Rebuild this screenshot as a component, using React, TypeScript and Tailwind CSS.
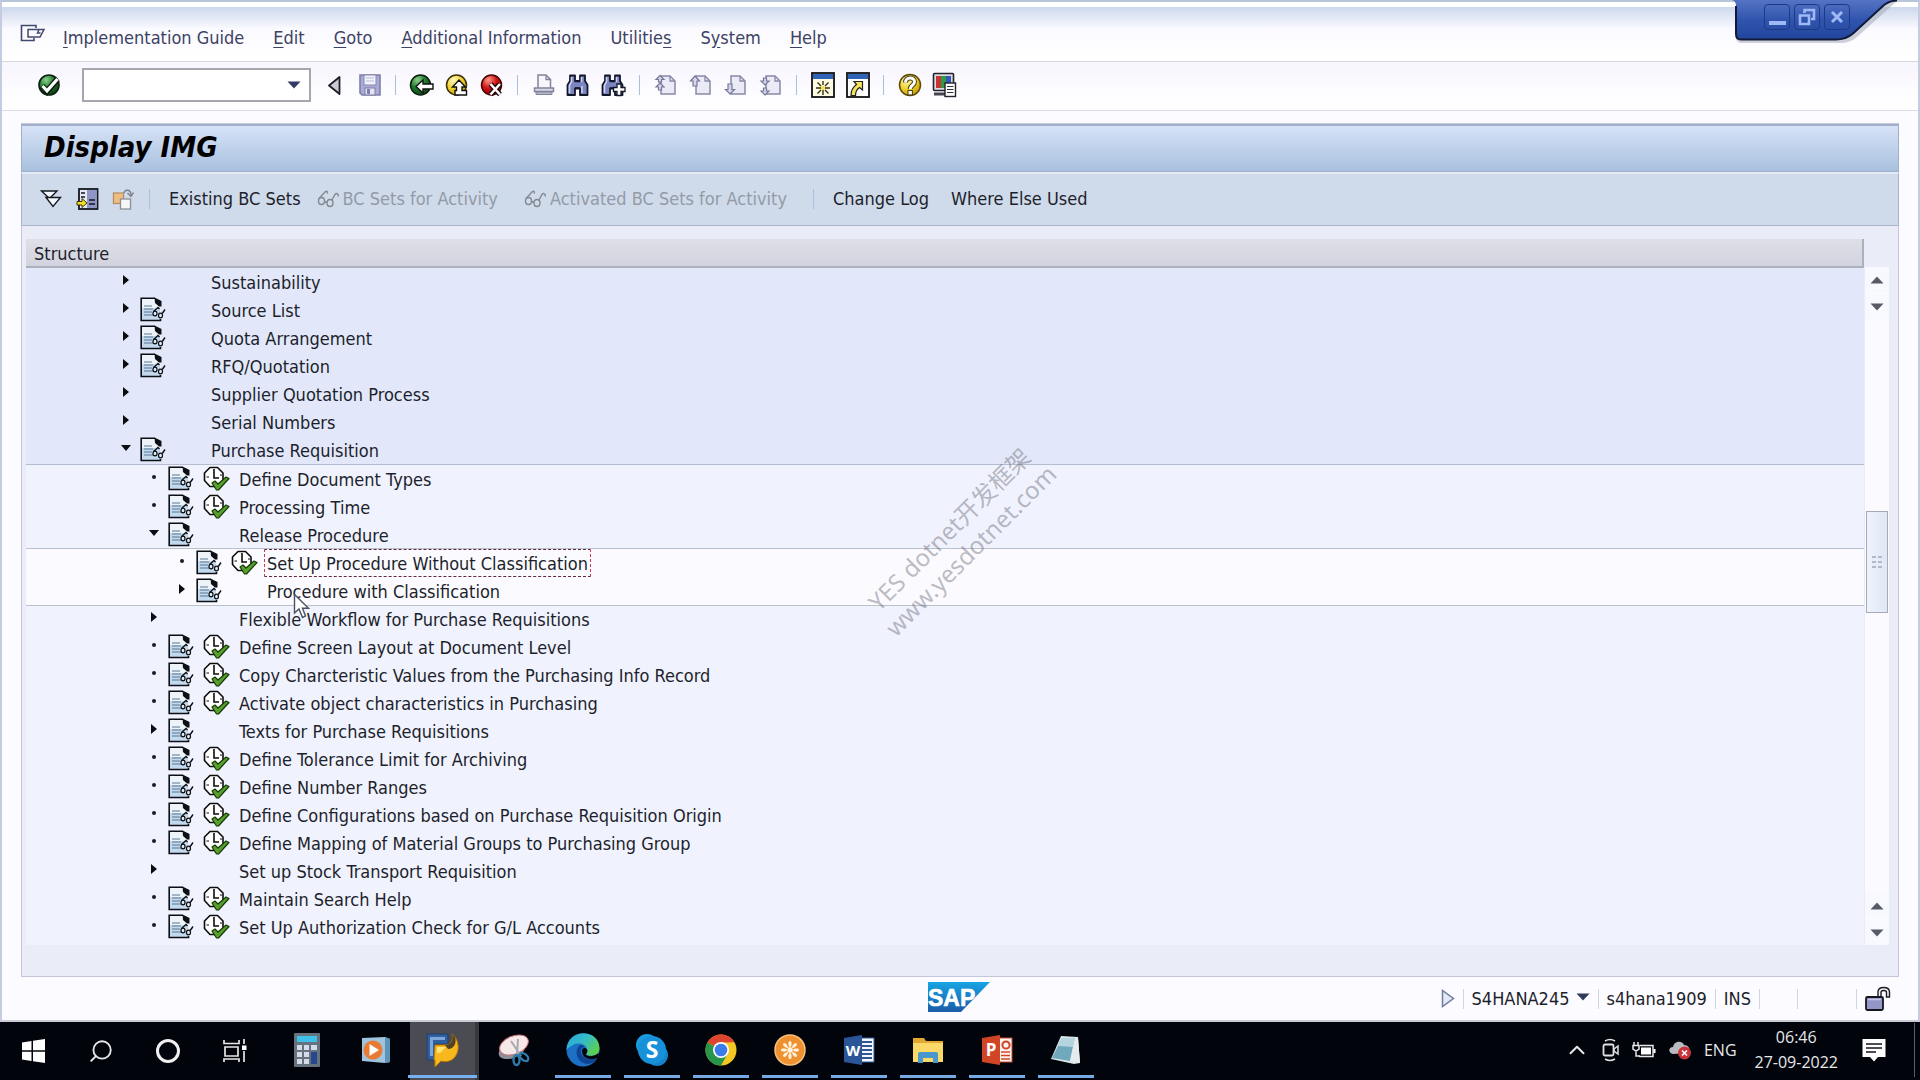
import React from 'react';
import { Search, ChevronUp } from 'lucide-react';

type IconProps = { className?: string };

const CheckBall = () => <svg width="24" height="24" viewBox="0 0 24 24">
    <defs>
      <radialGradient id="greenBall" cx="0.35" cy="0.25" r="0.9">
        <stop offset="0" stopColor="#8fd08f" />
        <stop offset="0.45" stopColor="#1d7a2a" />
        <stop offset="1" stopColor="#06300c" />
      </radialGradient>
      <radialGradient id="yellowBall" cx="0.35" cy="0.25" r="0.9">
        <stop offset="0" stopColor="#fff9c0" />
        <stop offset="0.5" stopColor="#f0cf28" />
        <stop offset="1" stopColor="#b58a00" />
      </radialGradient>
      <radialGradient id="redBall" cx="0.35" cy="0.25" r="0.9">
        <stop offset="0" stopColor="#ff9a8c" />
        <stop offset="0.45" stopColor="#cf1414" />
        <stop offset="1" stopColor="#7c0000" />
      </radialGradient>
    </defs>
    <circle cx="12" cy="12" r="10" fill="url(#greenBall)" stroke="#0a1f10" strokeWidth="1.6" />
    <path d="M5 13 L10 18.5 L20.5 6" fill="none" stroke="#0a1f10" strokeWidth="6" />
    <path d="M5.5 13 L10 17.8 L20.5 6" fill="none" stroke="#fff" strokeWidth="3.2" />
  </svg>;

const BackTriangle = () => <svg width="15" height="21" viewBox="0 0 15 21">
    <path d="M12.5 2 V19 L2 10.5 Z" fill="#c9cad3" stroke="#1d1d28" strokeWidth="1.8" strokeLinejoin="round" />
  </svg>;

const SaveIcon = () => <svg width="24" height="24" viewBox="0 0 24 24">
    <path d="M2 2 H22 V22 H4 L2 20 Z" fill="#a9abd6" stroke="#7d7fa8" strokeWidth="1.6" />
    <rect x="6" y="2" width="12" height="10" fill="#f2f2fb" stroke="#8587ae" />
    <path d="M8 5 H16 M8 8 H16" stroke="#b9bbd8" />
    <rect x="7" y="15" width="10" height="7" fill="#e4e4f2" stroke="#7d7fa8" />
    <rect x="9" y="16" width="3" height="5" fill="#7d7fa8" />
  </svg>;

const ExitBack = () => <svg width="25" height="24" viewBox="0 0 25 24">
    <circle cx="11.5" cy="12" r="10" fill="url(#greenBall)" stroke="#0a1f10" strokeWidth="1.5" />
    <path d="M7 13.5 L14 7 V11 H24 V16 H14 V20 Z" fill="#fff" stroke="#111" strokeWidth="1.4" />
  </svg>;

const ExitUp = () => <svg width="24" height="24" viewBox="0 0 24 24">
    <circle cx="11.5" cy="12" r="10" fill="url(#yellowBall)" stroke="#3c3206" strokeWidth="1.5" />
    <path d="M14 7 L20.5 14 H17 V17.5 H21.5 V22 H10 V17.5 H11.5 V14 H7.5 Z" fill="#fff" stroke="#111" strokeWidth="1.4" />
  </svg>;

const CancelBall = () => <svg width="24" height="24" viewBox="0 0 24 24">
    <circle cx="11.5" cy="12" r="10" fill="url(#redBall)" stroke="#4a0505" strokeWidth="1.5" />
    <path d="M10.5 11 L20 21.5 M20 11 L10.5 21.5" stroke="#1c0505" strokeWidth="5" />
    <path d="M10.5 11 L20 21.5 M20 11 L10.5 21.5" stroke="#fff" strokeWidth="2.6" />
  </svg>;

const PrintIcon = () => <svg width="22" height="24" viewBox="0 0 22 24">
    <path d="M5 15 V2 H13 L17.5 6.5 V15" fill="#f7f7fb" stroke="#82829c" strokeWidth="1.5" />
    <path d="M13 2 V6.5 H17.5" fill="none" stroke="#82829c" strokeWidth="1.3" />
    <path d="M1.5 15 H20.5 V18.5 H1.5 Z" fill="#d8d8e6" stroke="#82829c" strokeWidth="1.5" />
    <path d="M3 19 H19 V21.5 H3 Z" fill="#b8b8cc" stroke="#82829c" />
  </svg>;

const Find = ({ plus }: { plus?: boolean }) => <svg width="25" height="24" viewBox="0 0 25 24">
    <path d="M4 2.5 H9 V8 H14 V2.5 H19 V8 L21.5 12 V22 H14 V15.5 H9 V22 H1.5 V12 L4 8 Z" fill="#7b85c0" stroke="#14172b" strokeWidth="1.8" strokeLinejoin="round" />
    <path d="M5.5 4 V8.5 L3.5 12.5 V20 M15.5 4 V9 M16 13 V20" stroke="#cdd3f2" strokeWidth="1.6" fill="none" />
    <path d="M9 8.5 H14 M9 15 H14" stroke="#14172b" strokeWidth="1.4" />
    {plus && <path d="M16 11 H20 V14.5 H24 V18.5 H20 V22.5 H16 V18.5 H12.5 V14.5 H16 Z" fill="#fff" stroke="#14172b" strokeWidth="1.3" />}
  </svg>;

const pageArrows: Record<string, string> = {
  first: 'M6 1.5 L10 5.5 H7.5 V8 H4.5 V5.5 H2 Z M6 9 L10 13 H7.5 V16 H4.5 V13 H2 Z',
  prev: 'M6 2 L10.5 7 H8 V12 H4 V7 H1.5 Z',
  next: 'M6 20 L10.5 15.5 H8 V10 H4 V15.5 H1.5 Z',
  last: 'M6 11 L10 7 H7.5 V4 H4.5 V7 H2 Z M6 21 L10 17 H7.5 V14 H4.5 V17 H2 Z'
};

const PageNav = ({ kind }: { kind: string }) => <svg width="23" height="23" viewBox="0 0 23 23">
    <path d="M7 2 H16 L21 7 V20 H7 Z" fill="#ebebf7" stroke="#8989a8" strokeWidth="1.5" />
    <path d="M16 2 V7 H21" fill="none" stroke="#8989a8" strokeWidth="1.3" />
    <path d={pageArrows[kind]} fill="#d6d6e6" stroke="#77779a" strokeWidth="1.2" />
  </svg>;

const NewSession = () => <svg width="24" height="26" viewBox="0 0 24 26">
    <rect x="1" y="1" width="22" height="24" fill="#fdfbe4" stroke="#111" strokeWidth="1.8" />
    <rect x="2" y="2" width="20" height="5" fill="#2e63b8" />
    <path d="M12 9 V13 M12 18 V23 M5 16 H10 M14 16 H19 M6.5 10.5 L10 14 M17.5 10.5 L14 14 M6.5 21.5 L10 18 M17.5 21.5 L14 18" stroke="#33310f" strokeWidth="1.4" />
    <circle cx="12" cy="16" r="2" fill="#f5df3e" />
  </svg>;

const Shortcut = () => <svg width="24" height="26" viewBox="0 0 24 26">
    <rect x="1" y="1" width="22" height="24" fill="#fdfdfd" stroke="#111" strokeWidth="1.8" />
    <rect x="2" y="2" width="20" height="5" fill="#2e63b8" />
    <path d="M8 9.5 H16.5 V18 L13.5 15.5 C10.5 17.5 9.5 20 9.5 23.5 L5 23.5 C5 18.5 7 15 10.5 12.5 Z" fill="#f3e45a" stroke="#222" strokeWidth="1.2" />
  </svg>;

const HelpBall = () => <svg width="24" height="26" viewBox="0 0 24 26">
    <circle cx="12" cy="13" r="10.5" fill="url(#yellowBall)" stroke="#5b4a08" strokeWidth="1.5" />
    <path d="M7.5 10.5 C7.5 4.5 16.5 4.5 16.5 10 C16.5 13.5 12.2 13 12.2 17" fill="none" stroke="#4a3d10" strokeWidth="5" />
    <path d="M7.5 10.5 C7.5 4.5 16.5 4.5 16.5 10 C16.5 13.5 12.2 13 12.2 17" fill="none" stroke="#fff" strokeWidth="3" />
    <rect x="10" y="18.5" width="4.4" height="4.4" fill="#fff" stroke="#4a3d10" />
  </svg>;

const LayoutIcon = () => <svg width="25" height="26" viewBox="0 0 25 26">
    <rect x="1.5" y="1.5" width="20" height="17" rx="1" fill="#dadbe2" stroke="#22222c" strokeWidth="1.6" />
    <rect x="4" y="4" width="5" height="12" fill="#c93333" />
    <rect x="9" y="4" width="5" height="12" fill="#2f9b45" />
    <rect x="14" y="4" width="5" height="12" fill="#3456b5" />
    <path d="M2 22 H14" stroke="#44444f" strokeWidth="3" />
    <rect x="13" y="11" width="10.5" height="13.5" fill="#fff" stroke="#22222c" strokeWidth="1.4" />
    <path d="M15 14.5 H21.5 M15 17.5 H21.5 M15 20.5 H21.5" stroke="#333" strokeWidth="1.1" />
  </svg>;

const MenuSheet = () => <svg width="26" height="20" viewBox="0 0 26 20">
    <path d="M16 4 V1.5 H1.5 V16.5 H14 V14" fill="none" stroke="#41496e" strokeWidth="1.6" />
    <path d="M8 5.5 H24 L20 13 H8 Z M19 5.5 L17.5 9 H20.5" fill="none" stroke="#41496e" strokeWidth="1.5" />
  </svg>;

const ExpandAll = () => <svg width="22" height="20" viewBox="0 0 22 20">
    <path d="M1.5 2 H17 L9.5 9.5 Z" fill="#f4f7fd" stroke="#14181f" strokeWidth="1.4" />
    <path d="M6 8.5 H20.5 L13 17.5 Z" fill="#f4f7fd" stroke="#14181f" strokeWidth="1.4" />
  </svg>;

const PositionIcon = () => <svg width="23" height="22" viewBox="0 0 23 22">
    <rect x="3" y="1" width="18.5" height="20" fill="#e6e8f4" stroke="#14161f" strokeWidth="1.8" />
    <rect x="11" y="2" width="9.5" height="18" fill="#8f96c4" />
    <path d="M5 5 H9 M5 9 H9 M13 12 H19 M13 16 H19" stroke="#14161f" strokeWidth="1.5" />
    <path d="M1 13.5 H6 V10.5 L11 15 L6 19.5 V17 H1 Z" fill="#f3e02a" stroke="#3b3605" />
  </svg>;

const WhereUsed = () => <svg width="22" height="22" viewBox="0 0 22 22">
    <rect x="1.5" y="5" width="10" height="10.5" fill="#efbd80" stroke="#b38c5e" strokeWidth="1.2" />
    <rect x="8.5" y="11" width="10" height="10" fill="#f7f7f7" stroke="#8d8f98" strokeWidth="1.3" />
    <path d="M12 5 C13 1 19 1 19 7 M15.5 5 L19 8.5 L21.5 4.5" fill="none" stroke="#7f828c" strokeWidth="1.4" />
  </svg>;

const Glasses = () => <svg width="23" height="18" viewBox="0 0 23 18">
    <ellipse cx="4.5" cy="11" rx="3" ry="3.5" fill="none" stroke="#84898f" strokeWidth="1.4" />
    <ellipse cx="13" cy="13" rx="3" ry="3.5" fill="none" stroke="#84898f" strokeWidth="1.4" />
    <path d="M2 8.5 L8.5 1.5 C10 0.5 11 2 10 3.5 M7.5 11.5 L10 12.5 M15 10 L18 4.5 C19.5 2.5 22 4 21 6.5" fill="none" stroke="#84898f" strokeWidth="1.4" />
  </svg>;

const DocIcon = () => <svg width="27" height="25" viewBox="0 0 27 25">
    <path d="M1.2 1.2 H15 L20.5 7 V23.5 H1.2 Z" fill="#eef3fa" />
    <path d="M2 11 H20 V23 H2 Z" fill="#c3d9ee" />
    <path d="M20.5 22 V23.5 H1.2 V1.2 H15" fill="none" stroke="#0c0f14" strokeWidth="1.6" />
    <path d="M14.5 0.5 L21.5 4 V9.5 H19 L15 6 Z" fill="#0c0f14" />
    <path d="M4 9 H12 M4 12 H13 M4 15 H12 M4 18 H13" stroke="#5c7896" strokeWidth="1.2" />
    <path d="M13.5 14.5 L18 10.5 L19.5 12" fill="none" stroke="#0c0f14" strokeWidth="1.4" />
    <ellipse cx="15" cy="16.5" rx="2" ry="2.4" fill="#e3edf7" stroke="#0c0f14" strokeWidth="1.2" />
    <ellipse cx="20.5" cy="18.5" rx="2" ry="2.4" fill="#e3edf7" stroke="#0c0f14" strokeWidth="1.2" />
    <path d="M22.2 16.5 L25 12.5" stroke="#0c0f14" strokeWidth="1.4" />
  </svg>;

const ExecIcon = () => <svg width="27" height="25" viewBox="0 0 27 25">
    <path d="M7 1.5 H14.5 L20 7 V14.5 L15 20.5 H7 L1.5 14.5 V7 Z" fill="#fff" stroke="#0d0d0d" strokeWidth="1.6" strokeLinejoin="round" />
    <path d="M11 3 V12 H16" fill="none" stroke="#0d0d0d" strokeWidth="1.6" />
    <path d="M3.5 11 H6 M17 9 H19" stroke="#0d0d0d" strokeWidth="1.2" />
    <path d="M9 17 L12 15 L15 18 L23 11 L26 12.5 L15.5 24 H13.5 Z" fill="#57a02c" stroke="#173a0a" strokeWidth="1.2" strokeLinejoin="round" />
  </svg>;

const DownTri = ({ className }: IconProps) => <svg width="14" height="8" viewBox="0 0 14 8" className={className}>
    <path d="M0.5 0.5 H13.5 L7 7.5 Z" fill="currentColor" />
  </svg>;

const UpTri = ({ className }: IconProps) => <svg width="14" height="8" viewBox="0 0 14 8" className={className}>
    <path d="M0.5 7.5 H13.5 L7 0.5 Z" fill="currentColor" />
  </svg>;

const SapLogo = () => <svg width="64" height="30" viewBox="0 0 64 30" role="img" aria-label="SAP">
    <defs>
      <linearGradient id="sapBlue" x1="0" y1="0" x2="0" y2="1">
        <stop offset="0" stopColor="#18a4e4" />
        <stop offset="1" stopColor="#1c5ba8" />
      </linearGradient>
    </defs>
    <path d="M1 0 H63 L34 30 H1 Z" fill="url(#sapBlue)" />
    <text x="1" y="24" fill="#fff" stroke="#fff" strokeWidth="0.6" fontSize="23" fontWeight="700" fontFamily="Liberation Sans, sans-serif">SAP</text>
  </svg>;

const menus = [
  ['', 'I', 'mplementation Guide'],
  ['', 'E', 'dit'],
  ['', 'G', 'oto'],
  ['', 'A', 'dditional Information'],
  ['Utilitie', 's', ''],
  ['S', 'y', 'stem'],
  ['', 'H', 'elp']
];

const toolbar: { label: string; icon: React.ReactNode }[][] = [
  [
    { label: 'Back', icon: <ExitBack /> },
    { label: 'Exit', icon: <ExitUp /> },
    { label: 'Cancel', icon: <CancelBall /> }
  ],
  [
    { label: 'Print', icon: <PrintIcon /> },
    { label: 'Find', icon: <Find /> },
    { label: 'Find next', icon: <Find plus /> }
  ],
  [
    { label: 'First page', icon: <PageNav kind="first" /> },
    { label: 'Previous page', icon: <PageNav kind="prev" /> },
    { label: 'Next page', icon: <PageNav kind="next" /> },
    { label: 'Last page', icon: <PageNav kind="last" /> }
  ],
  [
    { label: 'Create session', icon: <NewSession /> },
    { label: 'Create shortcut', icon: <Shortcut /> }
  ],
  [
    { label: 'Help', icon: <HelpBall /> },
    { label: 'Customize layout', icon: <LayoutIcon /> }
  ]
];

type Node = {
  text: string;
  level: 0 | 1 | 2;
  state: 'closed' | 'open' | 'leaf';
  doc?: boolean;
  exec?: boolean;
  selected?: boolean;
};

const outer: Node[] = [
  { text: 'Sustainability', level: 0, state: 'closed' },
  { text: 'Source List', level: 0, state: 'closed', doc: true },
  { text: 'Quota Arrangement', level: 0, state: 'closed', doc: true },
  { text: 'RFQ/Quotation', level: 0, state: 'closed', doc: true },
  { text: 'Supplier Quotation Process', level: 0, state: 'closed' },
  { text: 'Serial Numbers', level: 0, state: 'closed' },
  { text: 'Purchase Requisition', level: 0, state: 'open', doc: true }
];

const requisition: Node[] = [
  { text: 'Define Document Types', level: 1, state: 'leaf', doc: true, exec: true },
  { text: 'Processing Time', level: 1, state: 'leaf', doc: true, exec: true },
  { text: 'Release Procedure', level: 1, state: 'open', doc: true }
];

const release: Node[] = [
  { text: 'Set Up Procedure Without Classification', level: 2, state: 'leaf', doc: true, exec: true, selected: true },
  { text: 'Procedure with Classification', level: 2, state: 'closed', doc: true }
];

const remaining: Node[] = [
  { text: 'Flexible Workflow for Purchase Requisitions', level: 1, state: 'closed' },
  { text: 'Define Screen Layout at Document Level', level: 1, state: 'leaf', doc: true, exec: true },
  { text: 'Copy Charcteristic Values from the Purchasing Info Record', level: 1, state: 'leaf', doc: true, exec: true },
  { text: 'Activate object characteristics in Purchasing', level: 1, state: 'leaf', doc: true, exec: true },
  { text: 'Texts for Purchase Requisitions', level: 1, state: 'closed', doc: true },
  { text: 'Define Tolerance Limit for Archiving', level: 1, state: 'leaf', doc: true, exec: true },
  { text: 'Define Number Ranges', level: 1, state: 'leaf', doc: true, exec: true },
  { text: 'Define Configurations based on Purchase Requisition Origin', level: 1, state: 'leaf', doc: true, exec: true },
  { text: 'Define Mapping of Material Groups to Purchasing Group', level: 1, state: 'leaf', doc: true, exec: true },
  { text: 'Set up Stock Transport Requisition', level: 1, state: 'closed' },
  { text: 'Maintain Search Help', level: 1, state: 'leaf', doc: true, exec: true },
  { text: 'Set Up Authorization Check for G/L Accounts', level: 1, state: 'leaf', doc: true, exec: true }
];

const indent = ['pl-[86px]', 'pl-[114px]', 'pl-[142px]'];

function TreeRow({ node }: { node: Node }) {
  return <li className={`flex h-7 items-center ${indent[node.level]}`}>
      <span className="flex w-7 justify-center pb-1">
        {node.state === 'leaf' && <span className="size-1 rounded-full bg-[#1b1d26]" />}
        {node.state === 'closed' && <button aria-label={`Expand ${node.text}`}>
            <svg width="6" height="10" viewBox="0 0 6 10" className="block"><path d="M0 0 L6 5 L0 10 Z" fill="#0b0c10" /></svg>
          </button>}
        {node.state === 'open' && <button aria-label={`Collapse ${node.text}`}>
            <svg width="10" height="6" viewBox="0 0 10 6" className="block"><path d="M0 0 H10 L5 6 Z" fill="#0b0c10" /></svg>
          </button>}
      </span>
      <span className="w-[35px] pb-0.5">{node.doc && <DocIcon />}</span>
      <span className="w-[33px] pb-0.5">{node.exec && <ExecIcon />}</span>
      <a href="#" className={`h-7 border px-0.5 leading-7 whitespace-nowrap ${node.selected ? 'border-dashed border-x-[#c8374c] border-y-[#5e2b3c]' : 'border-transparent'}`}>{node.text}</a>
    </li>;
}

function Separator() {
  return <span className="mx-2 h-5 w-px bg-[#a9bfe0]" />;
}

function WindowControls() {
  return <div className="absolute -top-0.5 right-5">
      <svg width="166" height="46" viewBox="0 0 166 46" className="block">
        <defs>
          <linearGradient id="tabBlue" x1="0" y1="0" x2="0" y2="1">
            <stop offset="0" stopColor="#5573c4" />
            <stop offset="0.5" stopColor="#3155ae" />
            <stop offset="1" stopColor="#21449c" />
          </linearGradient>
        </defs>
        <path d="M4 0 V37 Q4 43 10 43 H108 Q118 43 125 37 L164 2 V0 Z" fill="#9da3b5" opacity="0.5" />
        <path d="M0 0 Q4 1 4 6 V34 Q4 39 9 39 H104 Q114 39 121 33 L152 5 Q158 0 165 0 Z" fill="url(#tabBlue)" />
        <path d="M4 6 V34 Q4 39.5 9 39.5 H104 Q114 39.5 121 33.5 L152 5 Q158 0.5 165 0.5" fill="none" stroke="#101a38" strokeWidth="2" />
      </svg>
      <div className="absolute top-1 left-8 flex gap-1 text-[#9fb8f6]">
        <button aria-label="Minimize" className="flex h-[26px] w-[26px] items-end justify-center rounded-sm border border-[#1d3a85] pb-1">
          <span className="h-1 w-[17px] bg-[#9fb8f6]" />
        </button>
        <button aria-label="Restore" className="flex h-[26px] w-[26px] items-center justify-center rounded-sm border border-[#1d3a85]">
          <svg width="18" height="18" viewBox="0 0 18 18"><path d="M6.5 5 V2 H16 V11 H13 M2 7.5 H11 V16 H2 Z" fill="none" stroke="currentColor" strokeWidth="2.6" /></svg>
        </button>
        <button aria-label="Close" className="flex h-[26px] w-[26px] items-center justify-center rounded-sm border border-[#1d3a85]">
          <svg width="14" height="14" viewBox="0 0 14 14"><path d="M2 2 L12 12 M12 2 L2 12" stroke="currentColor" strokeWidth="3" /></svg>
        </button>
      </div>
    </div>;
}

function ScrollButton({ label, up }: { label: string; up?: boolean }) {
  return <button aria-label={label} className="flex h-[25px] w-full items-center justify-center bg-[#f8f9fe] text-[#575b66]">
      {up ? <UpTri /> : <DownTri />}
    </button>;
}

function Scrollbar() {
  return <div className="flex w-6 flex-col gap-0.5 bg-[#fafaff]">
      <ScrollButton up label="Scroll up" />
      <ScrollButton label="Scroll down" />
      <div className="flex flex-1 flex-col items-center">
        <div className="flex-[191]" />
        <div className="flex w-[22px] flex-[101] items-center justify-center border border-[#a6abba] bg-linear-to-r from-[#eef2fb] to-[#dfe8f5]">
          <svg width="12" height="14" viewBox="0 0 12 14">
            <path d="M1 2 H5 M7 2 H11 M1 7 H5 M7 7 H11 M1 12 H5 M7 12 H11" stroke="#b3b9c8" strokeWidth="2" />
          </svg>
        </div>
        <div className="flex-[279]" />
      </div>
      <ScrollButton up label="Line up" />
      <ScrollButton label="Line down" />
    </div>;
}

const apps: { label: string; icon: React.ReactNode; running?: boolean; active?: boolean }[] = [
  {
    label: 'Calculator',
    icon: <svg width="26" height="34" viewBox="0 0 26 34">
        <rect width="26" height="34" rx="1" fill="#66737f" />
        <rect x="3" y="3" width="20" height="6" fill="#3fc0ea" />
        <path d="M3 12 H8 V17 H3 Z M10 12 H15 V17 H10 Z M17 12 H23 V17 H17 Z M3 19 H8 V24 H3 Z M10 19 H15 V24 H10 Z M3 26 H8 V31 H3 Z M10 26 H15 V31 H10 Z" fill="#d3daea" />
        <rect x="17" y="19" width="6" height="12" fill="#24478e" />
      </svg>
  },
  {
    label: 'Media Player',
    icon: <svg width="30" height="28" viewBox="0 0 30 28">
        <path d="M1 2 L24 1 L29 3 V26 L24 27 L1 25 Z" fill="#9fc4dd" />
        <path d="M24 1 L29 3 V26 L24 27 Z" fill="#5d93b8" />
        <circle cx="12" cy="14" r="9.5" fill="#e97a31" />
        <path d="M8.5 8 V20 L18 14 Z" fill="#fff" />
      </svg>
  },
  {
    label: 'SAP Logon',
    active: true,
    icon: <svg width="34" height="36" viewBox="0 0 34 36">
        <path d="M1 2 H22 V12 H9 V28 H1 Z" fill="#2f5f9f" stroke="#1c3f70" />
        <path d="M4 5 H19 V8 H7 V24 H4 Z" fill="#7ea6d8" />
        <path d="M9 13 H19 C25 13 28 8 26 2 C33 7 35 20 27 27 C23 30 18 30 15 29 L9 35 V28 L8 28 Z" fill="#f6b81c" stroke="#b97606" />
        <path d="M26 2 C28 8 25 13 19 13 L22 17 C28 17 31 11 29 5 Z" fill="#544426" />
        <path d="M11 15 H20 L14 21 H11 Z" fill="#ffe27a" />
      </svg>
  },
  {
    label: 'Snipping Tool',
    icon: <svg width="34" height="34" viewBox="0 0 34 34">
        <ellipse cx="15" cy="17" rx="14" ry="8" fill="#8c8f97" transform="rotate(-22 15 17)" />
        <ellipse cx="17" cy="12" rx="15" ry="9" fill="#f7e8ea" stroke="#d0737a" transform="rotate(-22 17 12)" />
        <path d="M14 8 L24 23 M21 6 L20 22" stroke="#a7a9b0" strokeWidth="2" />
        <ellipse cx="19.5" cy="27" rx="3" ry="5" fill="none" stroke="#2f7cab" strokeWidth="2.4" />
        <ellipse cx="27" cy="24" rx="3" ry="5" fill="none" stroke="#2f7cab" strokeWidth="2.4" transform="rotate(-50 27 24)" />
      </svg>
  },
  {
    label: 'Edge',
    running: true,
    icon: <svg width="34" height="34" viewBox="0 0 34 34">
        <defs>
          <linearGradient id="edgeTop" x1="0" y1="0" x2="1" y2="0.6">
            <stop offset="0" stopColor="#2aa5df" />
            <stop offset="0.55" stopColor="#35bcc6" />
            <stop offset="1" stopColor="#5ed04f" />
          </linearGradient>
        </defs>
        <circle cx="17" cy="17" r="16.5" fill="#1b6fc4" />
        <path d="M0.5 17 C1 -5 33 -5 33.5 15 C33.5 22 27 24 21 22 C19 21 22 20 21 16 C20 11 12 9 7 12 C3 14 1 16 0.5 17 Z" fill="url(#edgeTop)" />
        <path d="M14 12 C8 17 10 29 21 31 C26 31 29 28 31 25 C26 28 17 26 15 20 C14 16 16 14 19 14 C17 12 15 12 14 12 Z" fill="#0e4492" />
        <path d="M16 18 C16 14 21 14 21.5 18 C21 21 19 21 21 22.5 C24 24 29 23 33 20 L32 25 C24 28 16 25 16 18 Z" fill="#05070c" />
      </svg>
  },
  {
    label: 'Skype',
    running: true,
    icon: <svg width="34" height="34" viewBox="0 0 34 34">
        <circle cx="12" cy="12" r="11" fill="#1a9be0" />
        <circle cx="22" cy="22" r="11" fill="#1583cc" />
        <circle cx="17" cy="17" r="14" fill="#1792da" />
        <text x="17" y="25" fill="#fff" fontSize="23" fontWeight="700" textAnchor="middle" fontFamily="Open Sans, sans-serif">S</text>
      </svg>
  },
  {
    label: 'Chrome',
    running: true,
    icon: <svg width="32" height="32" viewBox="0 0 32 32">
        <circle cx="16" cy="16" r="15.5" fill="#f6c623" />
        <path d="M16 16 L2.600 8.200 A15.5 15.5 0 0 0 16 31.5 L22.5 20 Z" fill="#27964a" />
        <path d="M16 16 L2.600 8.200 A15.5 15.5 0 0 1 29.400 8.200 L16 8.5 Z" fill="#e0432f" />
        <circle cx="16" cy="16" r="8" fill="#fff" />
        <circle cx="16" cy="16" r="6.3" fill="#3b7bea" />
      </svg>
  },
  {
    label: 'Meetings',
    running: true,
    icon: <svg width="32" height="32" viewBox="0 0 32 32">
        <circle cx="16" cy="16" r="15" fill="#ee9130" stroke="#fbc27b" strokeWidth="1.5" />
        <g stroke="#fff3dd" strokeWidth="3" strokeLinecap="round">
          <path d="M16 8.500 V11 M16 21 V23.500 M8.500 16 H11 M21 16 H23.500 M10.500 10.500 L12 12 M20 20 L21.500 21.500 M21.500 10.500 L20 12 M12 20 L10.500 21.500" />
        </g>
        <path d="M16 9 V23 M9 16 H23 M11 11 L21 21 M21 11 L11 21" stroke="#fff3dd" strokeWidth="1.2" />
        <circle cx="16" cy="16" r="2.4" fill="#fff3dd" />
      </svg>
  },
  {
    label: 'Word',
    running: true,
    icon: <svg width="32" height="32" viewBox="0 0 32 32">
        <rect x="15" y="4" width="16" height="24" fill="#f5f7fc" stroke="#2c5699" />
        <path d="M19 8 H29 M19 12 H29 M19 16 H29 M19 20 H29 M19 24 H29" stroke="#2c5699" strokeWidth="1.8" />
        <path d="M1 4 L19 1 V31 L1 28 Z" fill="#2a5699" />
        <text x="10" y="21.5" fill="#fff" fontSize="15" fontWeight="700" textAnchor="middle" fontFamily="Open Sans, sans-serif">W</text>
      </svg>
  },
  {
    label: 'File Explorer',
    running: true,
    icon: <svg width="32" height="28" viewBox="0 0 32 28">
        <path d="M1 2 H12 L14 5 H31 V26 H1 Z" fill="#e3a92f" />
        <path d="M1 7 H31 V26 H1 Z" fill="#fbd968" />
        <path d="M6 27 V18 Q6 16 8 16 H24 Q26 16 26 18 V27 H21 V22 H11 V27 Z" fill="#4a97cd" />
      </svg>
  },
  {
    label: 'PowerPoint',
    running: true,
    icon: <svg width="32" height="32" viewBox="0 0 32 32">
        <rect x="15" y="4" width="16" height="24" fill="#fbf4f2" stroke="#d04526" />
        <circle cx="25" cy="11" r="3.6" fill="none" stroke="#d04526" strokeWidth="2" />
        <path d="M20 18 H29 M20 21.5 H29 M20 25 H29" stroke="#d04526" strokeWidth="1.6" />
        <path d="M1 4 L19 1 V31 L1 28 Z" fill="#d04526" />
        <text x="10" y="22" fill="#fff" fontSize="17" fontWeight="700" textAnchor="middle" fontFamily="Open Sans, sans-serif">P</text>
      </svg>
  },
  {
    label: 'Notepad',
    running: true,
    icon: <svg width="32" height="32" viewBox="0 0 32 32">
        <path d="M11 2 L28 3 L30 29 L24 30 L1 25 Z" fill="#d9e6ec" />
        <path d="M12 4 L25 4 L20 27 L2 24 Z" fill="#6fa9bb" />
        <path d="M12 4 L25 4 L23 13 L8 12 Z" fill="#b5d5de" />
        <path d="M25 4 L28 4 L30 29 L20 27 Z" fill="#e6ebee" />
      </svg>
  }
];

function Taskbar() {
  return <footer className='flex h-[58px] items-stretch bg-[#02040b] font-["Open_Sans",sans-serif] text-[16px] text-[#e6e8ec]'>
      <div className="flex pr-1">
        <button aria-label="Start" className="flex w-[67px] items-center justify-center">
          <svg width="23" height="24" viewBox="0 0 23 24"><path d="M0 3.5 L9.5 2 V11.3 H0 Z M11 1.8 L23 0 V11.3 H11 Z M0 12.7 H9.5 V22 L0 20.5 Z M11 12.7 H23 V24 L11 22.2 Z" fill="#fff" /></svg>
        </button>
        <button aria-label="Search" className="flex w-[67px] items-center justify-center"><Search size={26} strokeWidth={1.7} className="-scale-x-100" /></button>
        <button aria-label="Cortana" className="flex w-[67px] items-center justify-center"><span className="size-6 rounded-full border-[3px] border-[#f0f0f0]" /></button>
        <button aria-label="Task View" className="flex w-[67px] items-center justify-center">
          <svg width="24" height="24" viewBox="0 0 24 24"><path d="M1 1 V4.5 H16 V1 M2 8 H15 V17 H2 Z M1 23 V20 H16 V23 M21 0 V5 M21 12 V23" fill="none" stroke="#e8e8e8" strokeWidth="1.7" /><rect x="19" y="6.5" width="4.5" height="4.5" fill="#fff" /></svg>
        </button>
      </div>
      {apps.map(app => <button key={app.label} aria-label={app.label} className={`flex w-[69px] flex-col items-center ${app.active ? 'border-r-4 border-[#38393f] bg-[#4b4c53]' : ''}`}>
          <span className="flex flex-1 items-center pt-0.5">{app.icon}</span>
          <span className={`mb-0.5 h-[3px] ${app.active ? 'w-[69px] bg-[#76b0f0]' : app.running ? 'w-14 bg-[#76a9e4]' : 'w-14'}`} />
        </button>)}
      <div className="ml-auto flex items-center pb-0.5">
        <button aria-label="Show hidden icons" className="mr-3"><ChevronUp size={26} strokeWidth={1.8} /></button>
        <svg width="18" height="24" viewBox="0 0 18 24" className="mr-3">
          <path d="M3 3 Q8 0 13 3 M3 21 Q8 24 13 21" fill="none" stroke="#dfe1e5" strokeWidth="1.5" />
          <rect x="1.5" y="6.5" width="10" height="11" rx="1.5" fill="none" stroke="#dfe1e5" strokeWidth="1.8" />
          <path d="M12 11 L16 8 V16 L12 13 Z" fill="none" stroke="#dfe1e5" strokeWidth="1.5" />
        </svg>
        <svg width="24" height="18" viewBox="0 0 24 18" className="mr-3">
          <path d="M2 1 V4 M6 1 V4 M1 4.5 H7 V8 L4 10 L1 8 Z M4 10 V15 H8" fill="none" stroke="#e8e8e8" strokeWidth="1.5" />
          <path d="M8 4.5 H21 V15.5 H7" fill="none" stroke="#e8e8e8" strokeWidth="1.5" />
          <rect x="9" y="6.5" width="10" height="7" fill="#fff" />
          <rect x="21.5" y="8" width="2" height="4" fill="#fff" />
        </svg>
        <svg width="24" height="20" viewBox="0 0 24 20" className="mr-3">
          <path d="M5 14 C0 13 0 7 5 7 C6 1 14 0 16 5 C21 5 23 10 20 13 Z" fill="#b9bbc0" />
          <circle cx="16.5" cy="13" r="6.5" fill="#c9343b" />
          <path d="M14 10.5 L19 15.5 M19 10.5 L14 15.5" stroke="#fff" strokeWidth="1.6" />
        </svg>
        <span className="mr-[18px]">ENG</span>
        <span className="mr-6 text-center leading-[25px]">06:46<br />27-09-2022</span>
        <button aria-label="Notifications" className="mr-[28px]">
          <svg width="24" height="24" viewBox="0 0 24 24"><path d="M0.5 1 H23.5 V19 H16 L12 23.5 L8 19 H0.5 Z" fill="#fff" /><path d="M4 6 H20 M4 10 H20 M4 14 H14" stroke="#11131a" strokeWidth="1.5" /></svg>
        </button>
        <span className="mr-[5px] h-[54px] w-px bg-[#5a5c62]" />
      </div>
    </footer>;
}

export default function App() {
  return <div className='relative flex min-h-screen flex-col bg-[#02040b] font-["DejaVu_Sans_Condensed","DejaVu_Sans",sans-serif] text-[18px] text-[#1d1f2b]'>
      <div className="relative flex flex-1 flex-col border-x-2 border-t-2 border-b-2 border-x-[#c3cce0] border-t-[#b9c6da] border-b-[#c9ccd6] bg-[#fcfbff]">
        <nav className="flex h-[60px] items-center gap-[29px] border-t-[5px] border-b border-t-white border-b-[#d6d6dc] bg-linear-to-b from-[#ced8ec] via-[#fafaff] via-40% to-white pt-1.5 pl-[18px] text-[#3c4264]">
          <span className="-mr-3 pb-1.5"><MenuSheet /></span>
          {menus.map(([before, key, after]) => <button key={before + key + after}>{before}<span className="underline underline-offset-3">{key}</span>{after}</button>)}
        </nav>
        <WindowControls />

        <div className="flex h-[49px] items-center border-b border-[#dcdce2] bg-linear-to-b from-[#f8f6fe] to-white pb-0.5 pl-[29px]">
          <button aria-label="Enter" className="flex w-[35px] justify-center"><CheckBall /></button>
          <div className="mr-1.5 ml-4 flex h-[34px] w-[229px] items-center border-2 border-[#a6a6ae] bg-white">
            <input aria-label="Command field" className="h-full min-w-0 flex-1 px-2 outline-none" />
            <button aria-label="Command history" className="px-2 text-[#333b63]"><DownTri /></button>
          </div>
          <button aria-label="Hide command field" className="flex w-[35px] justify-center"><BackTriangle /></button>
          <button aria-label="Save" className="flex w-[35px] justify-center"><SaveIcon /></button>
          {toolbar.map((group, i) => <div key={i} className="flex items-center">
              <Separator />
              {group.map(item => <button key={item.label} aria-label={item.label} className="flex w-[35px] justify-center">{item.icon}</button>)}
            </div>)}
        </div>

        <main className="mx-[19px] mt-3 flex flex-1 flex-col border border-[#c3c6da] bg-[#eaedf8]">
          <h1 className="-mx-px flex h-12 items-center border border-t-2 border-[#a0b0cb] bg-linear-to-b from-[#d6e2f6] to-[#a9c1df] pb-0.5 pl-[22px] text-[29px] font-bold italic text-black">Display IMG</h1>
          <div className="-mx-px flex h-[54px] items-center border border-t-2 border-[#a9b5cb] border-t-[#e4ecf8] bg-[#cfdaeb] pb-0.5 pl-[11px]">
            <button aria-label="Expand all" className="flex w-9 justify-center"><ExpandAll /></button>
            <button aria-label="Position" className="flex w-9 justify-center"><PositionIcon /></button>
            <button aria-label="Where used" className="flex w-9 justify-center"><WhereUsed /></button>
            <Separator />
            <button className="pr-2 pl-[11px]">Existing BC Sets</button>
            <button disabled className="flex items-center gap-[3px] pr-[18px] pl-2 text-[#949ba6]"><Glasses />BC Sets for Activity</button>
            <button disabled className="flex items-center gap-[3px] pr-[18px] pl-2 text-[#949ba6]"><Glasses />Activated BC Sets for Activity</button>
            <Separator />
            <button className="px-[11px]">Change Log</button>
            <button className="px-[11px]">Where Else Used</button>
          </div>

          <div className="mt-[13px] mr-[9px] mb-[31px] ml-1 flex flex-1">
            <section className="flex flex-1 flex-col">
              <h2 className="flex h-[29px] items-center border-r-2 border-b-2 border-[#adb1bd] bg-linear-to-b from-[#dfdfe8] to-[#d2d3de] pt-0.5 pl-2">Structure</h2>
              <div className="relative flex-1 bg-[#f0f2fe]">
                <ul className="border-b border-[#b4bdd0] bg-[#e2e8fa]">
                  {outer.map(node => <TreeRow key={node.text} node={node} />)}
                </ul>
                <ul>
                  {requisition.map(node => <TreeRow key={node.text} node={node} />)}
                </ul>
                <ul className="-mt-px border-y border-[#b9c1cd] bg-[#fbfbff]">
                  {release.map(node => <TreeRow key={node.text} node={node} />)}
                </ul>
                <ul className="-mt-px">
                  {remaining.map(node => <TreeRow key={node.text} node={node} />)}
                </ul>
                <svg width="18" height="27" viewBox="0 0 18 27" className="absolute top-[325px] left-[267px]">
                  <path d="M1.5 1.5 V20 L6 16 L9.5 24.5 L12.5 23 L9.5 15.2 H15.5 Z" fill="#fff" stroke="#4d5060" strokeWidth="1.4" />
                </svg>
              </div>
            </section>
            <div className="flex pt-7 pl-px"><Scrollbar /></div>
          </div>
        </main>

        <div className="flex h-[43px] items-center pr-[27px] pl-[925px]">
          <span className="pb-1"><SapLogo /></span>
          <div className="ml-auto flex items-center">
            <button aria-label="Show status" className="mr-2">
              <svg width="14" height="19" viewBox="0 0 14 19"><path d="M1.5 1.5 V17.5 L12.5 9.5 Z" fill="#e3e8f5" stroke="#6f7da3" strokeWidth="1.5" /></svg>
            </button>
            <span className="h-5 w-px bg-[#d3d3dd]" />
            <button className="flex items-center gap-1.5 px-2">S4HANA245<DownTri className="mb-1 text-[#2f3b5c]" /></button>
            <span className="h-5 w-px bg-[#d3d3dd]" />
            <span className="px-2">s4hana1909</span>
            <span className="h-5 w-px bg-[#d3d3dd]" />
            <span className="px-2">INS</span>
            <span className="mr-[37px] h-5 w-px bg-[#d3d3dd]" />
            <span className="mr-[58px] h-5 w-px bg-[#d3d3dd]" />
            <span className="mr-2 h-5 w-px bg-[#d3d3dd]" />
            <svg width="26" height="25" viewBox="0 0 26 25">
              <path d="M13 12 V6 Q13 1.5 18.5 1.5 Q24.5 1.5 24.5 6 V11 H21.5 V6.5 Q21.5 4.5 18.7 4.5 Q16 4.5 16 6.5 V12" fill="#f2f2f6" stroke="#1b1b24" strokeWidth="1.4" />
              <rect x="1" y="11" width="17" height="13" rx="1.5" fill="#9596c8" stroke="#15151d" strokeWidth="1.8" />
              <path d="M3 13.5 H16" stroke="#c6c7e8" strokeWidth="1.5" />
            </svg>
          </div>
        </div>
      </div>
      <Taskbar />

      <div className='pointer-events-none absolute top-1/2 left-1/2 -translate-x-1/2 -translate-y-1/2 -rotate-45 text-center font-["Noto_Sans","Noto_Sans_CJK_SC",sans-serif] text-[24px] leading-[30px] whitespace-nowrap text-[#55555f]/40'>
        YES dotnet开发框架<br />www.yesdotnet.com
      </div>
    </div>;
}
